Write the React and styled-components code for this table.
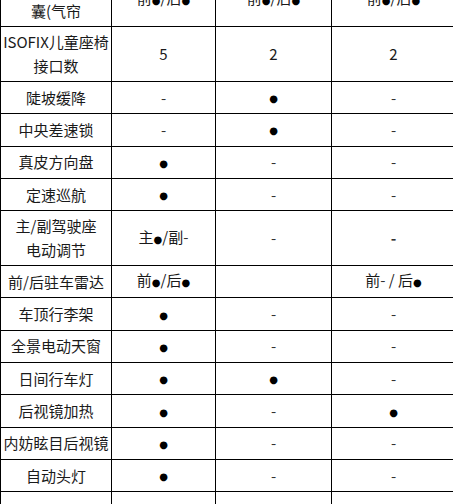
import React from "react";
import styled, { createGlobalStyle } from "styled-components";

const GlobalStyle = createGlobalStyle`
  html, body {
    margin: 0;
    padding: 0;
    background: #fff;
    overflow: hidden;
  }
  body {
    font-family: "Noto Sans CJK SC", "Noto Sans", sans-serif;
    color: #1a1a1a;
  }
`;

const Page = styled.div`
  width: 453px;
  height: 504px;
  overflow: hidden;
`;

const Table = styled.table`
  width: 455px;
  margin-top: -29px;
  border-collapse: collapse;
  table-layout: fixed;
  font-size: 15px;
`;

const Col = styled.col`
  width: ${(p) => p.$w}px;
`;

const Row = styled.tr`
  height: ${(p) => (p.$tall ? 55 : 32.3)}px;
`;

const Cell = styled.td`
  border: 1px solid #000;
  padding: 0;
  text-align: center;
  vertical-align: middle;
  line-height: 24px;
  white-space: nowrap;
  font-weight: ${(p) => (p.$bold ? 700 : 400)};
`;

const Dot = styled.span`
  font-family: "DejaVu Sans", sans-serif;
  font-size: 10px;
  color: #000;
`;

const Dash = styled.span`
  color: #333;
`;

// ● and - are the only marks in the value cells
const renderValue = (v) =>
  v.split("").map((ch, i) =>
    ch === "●" ? (
      <Dot key={i}>●</Dot>
    ) : ch === "-" ? (
      <Dash key={i}>-</Dash>
    ) : (
      <React.Fragment key={i}>{ch}</React.Fragment>
    )
  );

const rows = [
  { label: ["前/后排头部气", "囊(气帘"], values: ["前●/后●", "前●/后●", "前●/后●"] },
  { label: ["ISOFIX儿童座椅", "接口数"], values: ["5", "2", "2"] },
  { label: ["陡坡缓降"], values: ["-", "●", "-"] },
  { label: ["中央差速锁"], values: ["-", "●", "-"] },
  { label: ["真皮方向盘"], values: ["●", "-", "-"] },
  { label: ["定速巡航"], values: ["●", "-", "-"] },
  { label: ["主/副驾驶座", "电动调节"], values: ["主●/副-", "-", "-"], bold: 2 },
  { label: ["前/后驻车雷达"], values: ["前●/后●", "", "前- / 后●"] },
  { label: ["车顶行李架"], values: ["●", "-", "-"] },
  { label: ["全景电动天窗"], values: ["●", "-", "-"] },
  { label: ["日间行车灯"], values: ["●", "●", "-"] },
  { label: ["后视镜加热"], values: ["●", "-", "●"] },
  { label: ["内妨眩目后视镜"], values: ["●", "-", "-"] },
  { label: ["自动头灯"], values: ["●", "-", "-"] },
  { label: [""], values: ["", "", ""] },
];

const App = () => (
  <Page>
    <GlobalStyle />
    <Table>
      <colgroup>
        <Col $w={111} />
        <Col $w={104} />
        <Col $w={116} />
        <Col $w={124} />
      </colgroup>
      <tbody>
        {rows.map((r, i) => (
          <Row key={i} $tall={r.label.length > 1}>
            <Cell>
              {r.label.map((l, j) => (
                <React.Fragment key={j}>
                  {j > 0 && <br />}
                  {l}
                </React.Fragment>
              ))}
            </Cell>
            {r.values.map((v, j) => (
              <Cell key={j} $bold={r.bold === j}>
                {renderValue(v)}
              </Cell>
            ))}
          </Row>
        ))}
      </tbody>
    </Table>
  </Page>
);

export default App;
